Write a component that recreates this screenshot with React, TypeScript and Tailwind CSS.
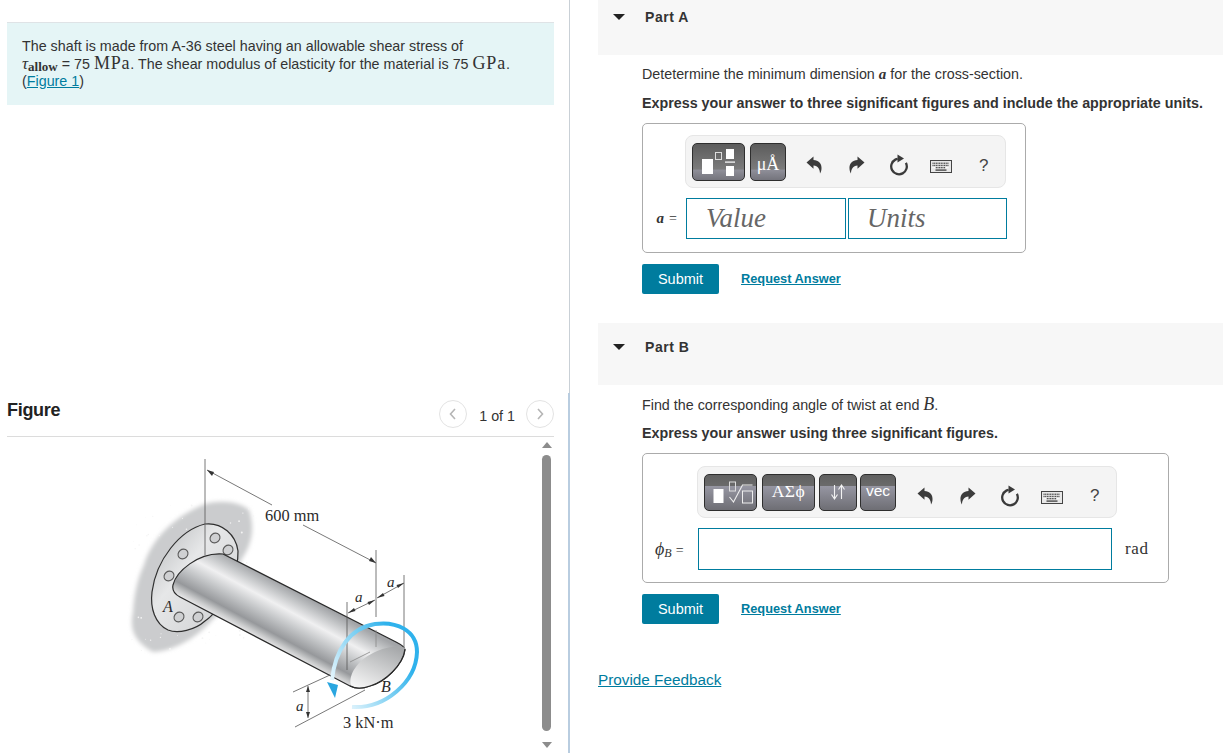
import React from "react";

const SANS = "font-['Liberation_Sans',Arial,sans-serif]";
const SERIF = "font-['Liberation_Serif','Times_New_Roman',serif]";

function Undo({ flip = false }: { flip?: boolean }) {
  return (
    <svg width="17" height="18" viewBox="0 0 17 18" style={flip ? { transform: "scaleX(-1)" } : undefined}>
      <path d="M0.5 6.5 L7.5 0.5 V4 C12.5 4 16 7.5 15.5 13 C15.3 15 14.6 16.5 14 17.5 C14 13.5 12 9.6 7.5 9.6 V12.8 Z" fill="#3c3c3c" />
    </svg>
  );
}

function Reset() {
  return (
    <svg width="20" height="22" viewBox="0 0 20 22">
      <circle cx="10" cy="12.5" r="7.8" fill="none" stroke="#3a3a3a" strokeWidth="2.3" strokeDasharray="39 10" transform="rotate(-28 10 12.5)" />
      <path d="M8.5 0.5 L15 4.6 L8.5 8.5 Z" fill="#3a3a3a" />
    </svg>
  );
}

function Keyboard() {
  const keys: React.ReactNode[] = [];
  for (let r = 0; r < 3; r++) {
    for (let c = 0; c < 10; c++) {
      keys.push(<rect key={`${r}-${c}`} x={2.5 + c * 1.65} y={2.6 + r * 2.2} width="1.1" height="1.3" fill={r === 2 && (c < 2 || c > 7) ? "#fff" : "#4a4a4a"} />);
    }
  }
  return (
    <svg width="22" height="13" viewBox="0 0 22 13">
      <rect x="0.5" y="0.5" width="21" height="12" fill="#e8e8e8" stroke="#444" />
      {keys}
      <rect x="5.5" y="9.4" width="11" height="1.4" fill="#4a4a4a" />
    </svg>
  );
}

function Slot({ children, w = "w-[42.4px]" }: { children: React.ReactNode; w?: string }) {
  return <div className={`${w} flex shrink-0 items-center justify-center pt-[7px]`}>{children}</div>;
}

function ToolIcons() {
  return (
    <>
      <Slot><Undo /></Slot>
      <Slot><Undo flip /></Slot>
      <Slot><Reset /></Slot>
      <Slot><div className="pt-[3px]"><Keyboard /></div></Slot>
      <Slot><span className={`${SANS} text-[17px] text-[#444] leading-none`}>?</span></Slot>
    </>
  );
}

const SPECKS: number[][] = [];
{
  let s = 7;
  const rnd = () => {
    s = (s * 16807) % 2147483647;
    return s / 2147483647;
  };
  for (let i = 0; i < 90; i++) SPECKS.push([132 + rnd() * 122, 505 + rnd() * 146, 0.4 + rnd() * 0.6]);
}

function Figure() {
  return (
    <svg width="534" height="316" viewBox="7 437 534 316" className="block shrink-0">
      <defs>
        <linearGradient id="shaft" gradientUnits="userSpaceOnUse" x1="311" y1="600" x2="283" y2="652">
          <stop offset="0" stopColor="#a3a5a8" />
          <stop offset="0.14" stopColor="#c2c4c6" />
          <stop offset="0.34" stopColor="#f0f0f1" />
          <stop offset="0.55" stopColor="#c6c8ca" />
          <stop offset="0.8" stopColor="#96989b" />
          <stop offset="0.92" stopColor="#cbcccd" />
          <stop offset="1" stopColor="#e8e8e9" />
        </linearGradient>
        <linearGradient id="cap" x1="0.8" y1="0" x2="0.2" y2="1">
          <stop offset="0" stopColor="#a6a8aa" />
          <stop offset="1" stopColor="#f4f4f4" />
        </linearGradient>
        <linearGradient id="flange" x1="0" y1="0" x2="1" y2="1">
          <stop offset="0" stopColor="#b3b5b7" />
          <stop offset="0.4" stopColor="#e6e7e8" />
          <stop offset="1" stopColor="#cdced0" />
        </linearGradient>
        <linearGradient id="arc" gradientUnits="userSpaceOnUse" x1="345" y1="708" x2="412" y2="670">
          <stop offset="0" stopColor="#eaf7fd" />
          <stop offset="0.6" stopColor="#7ccff2" />
          <stop offset="1" stopColor="#2fb2ec" />
        </linearGradient>
        <filter id="soft"><feGaussianBlur stdDeviation="2" /></filter>
      </defs>

      <path d="M205 504 C222 499 242 503 249 510 C254 525 254 542 241 560 C236 585 226 610 213 619 C195 640 172 651 153 652 C135 642 129 630 133 612 C134 592 139 575 144 565 C150 543 170 518 205 504 Z" fill="#cbccce" filter="url(#soft)" />
      {SPECKS.map(([x, y, r], i) => (
        <circle key={i} cx={x} cy={y} r={r} fill="#f4f4f4" />
      ))}

      <path d="M205 524 C222 522 236 535 238 551 C239 570 222 610 205 621 C195 630 178 634 168 630 C155 624 150 608 152 592 C156 560 180 530 205 524 Z" fill="url(#flange)" stroke="#2f2f2f" strokeWidth="1.2" />

      {[[215,538],[228,550],[183,554],[169,576],[179,617],[198,617]].map(([x, y], i) => (
        <ellipse key={i} cx={x} cy={y} rx="5.2" ry="4.6" fill="#cfd0d2" stroke="#5a5a5a" strokeWidth="1.1" transform={`rotate(-40 ${x} ${y})`} />
      ))}

      <path d="M223 554 L396 642 C402 645 405 647 405 650 C403 665 385 682 370 686 C362 689 356 689 350 686 L180 597 C174 594 172 590 173 585 C176 572 198 552 223 554 Z" fill="url(#shaft)" stroke="#2a2a2a" strokeWidth="1.2" />
      <path d="M373 653 C385 647 398 645 405 648 C404 662 386 681 370 686 C362 689 356 689 351 685 C348 675 358 660 373 653 Z" fill="url(#cap)" />
      <path d="M405 649 C403 665 385 682 370 686 C362 689 356 689 350 686" fill="none" stroke="#2a2a2a" strokeWidth="1.2" />

      <g stroke="#555" strokeWidth="0.8" fill="none">
        <path d="M205 459 V555" />
        <path d="M207 470 L272 505" />
        <path d="M303 525 L376 563" />
        <path d="M376 550 V617" />
        <path d="M376 630 V647" stroke="#888" />
        <path d="M347 602 V670" />
        <path d="M404 575 V647" />
        <path d="M348 613 L375 600" />
        <path d="M377 598 L404 583" />
        <path d="M350 662 L370 652" stroke="#888" />
        <path d="M293 692 L330 675" />
        <path d="M295 727 L365 690" />
        <path d="M308 686 V718" />
      </g>
      <g fill="#333">
        <path d="M207 470 L214 472 L212 476 Z" />
        <path d="M376 563 L369 561 L371 557 Z" />
        <path d="M348 613 L354 608 L355.5 611 Z" />
        <path d="M375 600 L369 605 L367.5 602 Z" />
        <path d="M377 598 L383 593 L384.5 596 Z" />
        <path d="M404 583 L398 588 L396.5 585 Z" />
        <path d="M308 686 L310 692 L306 692 Z" />
        <path d="M308 718 L310 712 L306 712 Z" />
      </g>

      <path d="M352 707 C385 709 416 682 417 652 C417 630 396 621 375 624 C350 628 335 650 332 680" fill="none" stroke="url(#arc)" strokeWidth="4" />
      <path d="M327 682 L338 685 L335 698 Z" fill="#2aa6e0" />

      <g className={SERIF} fill="#2b2b2b">
        <text x="265" y="521" fontSize="16.4">600 mm</text>
        <text x="343" y="728" fontSize="16.4">3 kN·m</text>
        <g fontStyle="italic">
          <text x="163" y="612" fontSize="16">A</text>
          <text x="381" y="692" fontSize="16">B</text>
          <text x="355" y="602" fontSize="15">a</text>
          <text x="387" y="587" fontSize="15">a</text>
          <text x="296" y="711" fontSize="15">a</text>
        </g>
      </g>
    </svg>
  );
}

function Scrollbar() {
  return (
    <div className="flex w-[11px] shrink-0 flex-col items-center">
      <div className="mt-[5px] h-0 w-0 border-x-[5px] border-b-[6px] border-x-transparent border-b-[#8c8c8c]" />
      <div className="mt-[7px] h-[276px] w-[9px] rounded-[5px] bg-[#8c8c8c]" />
      <div className="mt-[11px] h-0 w-0 border-x-[5px] border-t-[6px] border-x-transparent border-t-[#8c8c8c]" />
    </div>
  );
}

function NavCircle({ d }: { d: string }) {
  return (
    <div className="flex h-[28px] w-[28px] items-center justify-center rounded-full border border-[#e3e3e3]">
      <svg width="10" height="14" viewBox="0 0 10 14"><path d={d} fill="none" stroke="#b5b5b5" strokeWidth="1.6" /></svg>
    </div>
  );
}

function PartHeader({ label, h, pt }: { label: string; h: string; pt: string }) {
  return (
    <div className={`${h} ${pt} flex items-start bg-[#f7f7f7]`}>
      <div className="ml-[15px] mt-[6px] h-0 w-0 border-x-[6px] border-t-[6px] border-x-transparent border-t-[#222]" />
      <span className="ml-[20px] h-[18px] text-[14px] font-bold leading-[19px] tracking-[0.55px] text-[#333]">{label}</span>
    </div>
  );
}

function Actions({ mt }: { mt: string }) {
  return (
    <div className={`${mt} flex h-[30px] items-center`}>
      <div className="flex h-[30px] w-[77px] items-center justify-center rounded-[2px] bg-[#007c9e] pt-[1px] text-[14.5px] text-white">Submit</div>
      <a className="ml-[22px] text-[12.8px] font-bold text-[#007c9e] underline">Request Answer</a>
    </div>
  );
}

const band = "bg-[linear-gradient(to_bottom,#5c5c5c_0%,#7b7b7b_70%,#8f8f99_72%,#74747c_100%)]";
const bandB = "bg-[linear-gradient(to_bottom,#606060_0%,#6a6a6a_30%,#9696a2_32%,#6e6e74_100%)]";
const btn = "flex shrink-0 items-center justify-center rounded-[5px] border border-[#2e2e2e] text-white";

export default function App() {
  return (
    <div className={`${SANS} flex h-[753px] w-[1223px] overflow-hidden bg-white text-[14.3px] text-[#333]`}>
      <div className="flex w-[570px] shrink-0 flex-col">
        <div className="h-[393px] border-r border-[#c9d0d6] pl-[7px] pt-[22px]">
          <div className="h-[83px] w-[547px] border-t border-[#dfe3e6] bg-[#e5f5f6] px-[15px] pt-[15px] leading-[17.5px]">
            <div className="h-[17.5px]">The shaft is made from A-36 steel having an allowable shear stress of</div>
            <div className="h-[17.5px] whitespace-nowrap">
              <span className={`${SERIF} italic text-[17px] leading-[0]`}>τ</span>
              <span className={`${SERIF} text-[13px] font-bold leading-[0] relative top-[2px]`}>allow</span>
              {" = 75 "}
              <span className={`${SERIF} text-[18px] leading-[0] tracking-[0.8px]`}>MPa</span>
              {". The shear modulus of elasticity for the material is 75 "}
              <span className={`${SERIF} text-[18px] leading-[0] tracking-[0.8px]`}>GPa</span>.
            </div>
            <div className="h-[17.5px]">(<a className="text-[#007c9e] underline">Figure 1</a>)</div>
          </div>
        </div>
        <div className="flex h-[360px] flex-col border-r-2 border-[#b9cde0] pl-[7px]">
          <div className="flex h-[44px] w-[547px] shrink-0 items-start justify-between border-b border-[#dcdcdc] pt-[7px]">
            <span className="text-[18px] font-bold leading-[20px] tracking-[-0.3px] text-[#222]">Figure</span>
            <div className="flex items-center">
              <NavCircle d="M7 2 L2.5 7 L7 12" />
              <span className="ml-[12px] mr-[11px] pt-[6px]">1 of 1</span>
              <NavCircle d="M3 2 L7.5 7 L3 12" />
            </div>
          </div>
          <div className="flex min-h-0 flex-1">
            <Figure />
            <Scrollbar />
          </div>
        </div>
      </div>

      <div className="w-[653px] pl-[28px]">
        <PartHeader label="Part A" h="h-[55px]" pt="pt-[8px]" />
        <div className="pl-[44px]">
          <div className="mt-[10px] h-[18px] leading-[18px]">
            Detetermine the minimum dimension <span className={`${SERIF} italic font-bold text-[15px] leading-[0]`}>a</span> for the cross-section.
          </div>
          <div className="mt-[11px] h-[18px] whitespace-nowrap font-bold leading-[18px]">Express your answer to three significant figures and include the appropriate units.</div>

          <div className="mt-[11px] h-[130px] w-[384px] rounded-[5px] border border-[#ababab] pt-[11px]">
            <div className="ml-[42px] flex h-[53px] w-[321px] items-center rounded-[8px] border border-[#e6e6e6] bg-[#f4f4f4] pl-[6px]">
              <div className={`${btn} ${band} h-[38px] w-[53px]`}>
                <svg width="34" height="30" viewBox="0 0 34 30">
                  <rect x="0" y="12" width="11" height="15" fill="#fff" />
                  <rect x="13.5" y="5.5" width="6" height="7" fill="none" stroke="#ddd" />
                  <rect x="24" y="2" width="8" height="10" fill="#fff" />
                  <rect x="23" y="14.5" width="10" height="1.2" fill="#fff" />
                  <rect x="24" y="19" width="8" height="10" fill="#fff" />
                </svg>
              </div>
              <div className={`${btn} ${band} ${SERIF} ml-[5px] h-[38px] w-[36px] pt-[6px] text-[18px]`}>μÅ</div>
              <div className="ml-[7px] flex"><ToolIcons /></div>
            </div>
            <div className="mt-[10px] flex h-[41px] items-center">
              <div className={`${SERIF} w-[43px] pr-[9px] text-right text-[14px] text-[#333]`}><span className="italic font-bold text-[15px]">a</span><span className="ml-[5px]">=</span></div>
              <div className={`${SERIF} flex h-[41px] w-[160px] items-center border border-[#007c9e] pl-[19px] text-[27px] italic text-[#666]`}>Value</div>
              <div className={`${SERIF} ml-[2px] flex h-[41px] w-[159px] items-center border border-[#007c9e] pl-[18px] text-[27px] italic text-[#666]`}>Units</div>
            </div>
          </div>
          <Actions mt="mt-[11px]" />
        </div>

        <div className="mt-[29px]">
          <PartHeader label="Part B" h="h-[62px]" pt="pt-[15px]" />
        </div>
        <div className="pl-[44px]">
          <div className="mt-[11px] h-[18px] leading-[18px]">
            Find the corresponding angle of twist at end <span className={`${SERIF} italic text-[18px] leading-[0]`}>B</span>.
          </div>
          <div className="mt-[10px] h-[18px] font-bold leading-[18px]">Express your answer using three significant figures.</div>

          <div className="mt-[11px] h-[130px] w-[527px] rounded-[5px] border border-[#ababab] pt-[12px]">
            <div className="ml-[54px] flex h-[52px] w-[420px] items-center rounded-[8px] border border-[#e6e6e6] bg-[#f4f4f4] pl-[6px]">
              <div className={`${btn} ${bandB} h-[37px] w-[53px]`}>
                <svg width="44" height="30" viewBox="0 0 44 30">
                  <rect x="4.5" y="12" width="10" height="14" fill="#fff" />
                  <rect x="20.5" y="5" width="6" height="9" fill="none" stroke="#ddd" />
                  <path d="M20.5 20 L24.5 25 L33.5 8 H43.5" fill="none" stroke="#eee" strokeWidth="1.1" />
                  <rect x="33.5" y="14" width="10" height="12" fill="none" stroke="#eee" />
                </svg>
              </div>
              <div className={`${btn} ${bandB} ${SERIF} ml-[5px] h-[37px] w-[53px] pb-[1px] text-[17.5px] tracking-[0.5px]`}>ΑΣϕ</div>
              <div className={`${btn} ${bandB} ml-[4px] h-[37px] w-[38px]`}>
                <svg width="18" height="18" viewBox="0 0 18 18">
                  <path d="M5.5 2 V15 M2.5 11.5 L5.5 16 L8.5 11.5 M12.5 16 V3 M9.5 6.5 L12.5 2 L15.5 6.5" fill="none" stroke="#f3f3f3" strokeWidth="1.1" />
                </svg>
              </div>
              <div className={`${btn} ${bandB} ml-[3px] h-[37px] w-[36px] pb-[2px] text-[15.5px]`}>vec</div>
              <div className="ml-[8px] flex"><ToolIcons /></div>
            </div>
            <div className="mt-[10px] flex h-[42px] items-center">
              <div className={`${SERIF} w-[55px] whitespace-nowrap pl-[12px] text-[14px] text-[#333]`}>
                <span className="italic text-[18px]">ϕ</span><span className="italic text-[12px] relative top-[2px]">B</span><span className="ml-[4px]">=</span>
              </div>
              <div className="h-[42px] w-[414px] border border-[#007c9e]" />
              <div className={`${SERIF} ml-[13px] text-[17px] tracking-[0.6px] text-[#333]`}>rad</div>
            </div>
          </div>
          <Actions mt="mt-[11px]" />
        </div>
        <div className="mt-[47px] h-[18px] text-[15.3px] leading-[18px]">
          <a className="text-[#007c9e] underline">Provide Feedback</a>
        </div>
      </div>
    </div>
  );
}
